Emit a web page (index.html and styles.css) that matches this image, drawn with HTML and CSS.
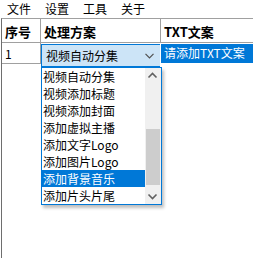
FILE: index.html
```html
<!DOCTYPE html>
<html lang="zh-CN">
<head>
    <meta charset="UTF-8">
    <title>视频处理</title>
    <link rel="stylesheet" href="styles.css">
</head>
<body>
    <div class="menubar">
        <span class="menu-item">文件</span>
        <span class="menu-item">设置</span>
        <span class="menu-item">工具</span>
        <span class="menu-item">关于</span>
    </div>

    <div class="grid">
        <div class="row header">
            <div class="cell col-no">序号</div>
            <div class="cell col-plan">处理方案</div>
            <div class="cell col-txt">TXT文案</div>
        </div>
        <div class="row">
            <div class="cell col-no">1</div>
            <div class="cell col-plan editing">
                <div class="combo">
                    <span class="combo-text">视频自动分集</span>
                    <svg class="combo-arrow" width="9" height="6" viewBox="0 0 9 6"><path d="M0.5 0.8 L4.5 4.8 L8.5 0.8" fill="none" stroke="#505050" stroke-width="1.2"/></svg>
                </div>
                <div class="dropdown">
                    <ul class="options">
                        <li>视频自动分集</li>
                        <li>视频添加标题</li>
                        <li>视频添加封面</li>
                        <li>添加虚拟主播</li>
                        <li>添加文字Logo</li>
                        <li>添加图片Logo</li>
                        <li class="selected">添加背景音乐</li>
                        <li>添加片头片尾</li>
                    </ul>
                    <div class="scrollbar">
                        <svg class="sb-btn" width="15" height="16" viewBox="0 0 15 16"><path d="M3.5 9.5 L7.5 5.5 L11.5 9.5" fill="none" stroke="#606060" stroke-width="1.6"/></svg>
                        <div class="sb-track"><div class="sb-thumb"></div></div>
                        <svg class="sb-btn" width="15" height="16" viewBox="0 0 15 16"><path d="M3.5 6.5 L7.5 10.5 L11.5 6.5" fill="none" stroke="#606060" stroke-width="1.6"/></svg>
                    </div>
                </div>
            </div>
            <div class="cell col-txt current">请添加TXT文案</div>
        </div>
    </div>
</body>
</html>
```

FILE: styles.css
```css
body {
    margin: 0;
    width: 253px;
    height: 258px;
    overflow: hidden;
    background-color: #ffffff;
    color: #000;
    font-family: "Microsoft YaHei", "Noto Sans CJK SC", sans-serif;
    font-size: 12px;
}

.menubar {
    display: flex;
    height: 18px;
    line-height: 17px;
}

.menu-item {
    padding: 0 7px;
}

.grid {
    height: 240px;
    margin-left: 1px;
    border-left: 1px solid #6e6e6e;
    border-top: 1px solid #a0a0a0;
}

.row {
    display: flex;
}

.cell {
    box-sizing: border-box;
    border-right: 1px solid #a0a0a0;
    border-bottom: 1px solid #a0a0a0;
    padding-left: 3px;
}

.row .cell {
    height: 21px;
    line-height: 21px;
}

.header .cell {
    height: 24px;
    padding-top: 3px;
    line-height: 20px;
    font-size: 13px;
    font-weight: bold;
}

.col-no {
    width: 39px;
}

.col-plan {
    width: 120px;
}

.col-txt {
    flex: 1;
    border-right: none;
}

.editing {
    position: relative;
    border: none;
}

.current {
    background-color: #0078d7;
    color: #fff;
    border-bottom: none;
    margin-top: 1px;
    height: 19px !important;
    line-height: 18px !important;
}

.combo {
    position: absolute;
    left: 0;
    top: 1px;
    width: 119px;
    height: 23px;
    box-sizing: border-box;
    display: flex;
    align-items: center;
    justify-content: space-between;
    padding: 0 6px 0 4px;
    background-color: #cce4f7;
    border: 1px solid #0078d7;
    border-right: none;
}

.combo-arrow {
    display: block;
}

.dropdown {
    position: absolute;
    left: 0;
    top: 24px;
    width: 121px;
    box-sizing: border-box;
    display: flex;
    border: 1px solid #0078d7;
    background-color: #fff;
    box-shadow: 2px 3px 3px rgba(0, 0, 0, 0.25);
}

.options {
    list-style: none;
    margin: 0;
    padding: 0;
    flex: 1;
}

.options li {
    height: 17px;
    line-height: 17px;
    padding-left: 1px;
    white-space: nowrap;
}

.options li.selected {
    background-color: #0078d7;
    color: #fff;
}

.scrollbar {
    width: 16px;
    display: flex;
    flex-direction: column;
    background-color: #f0f0f0;
}

.sb-btn {
    display: block;
    flex: none;
}

.sb-track {
    flex: 1;
    padding: 0 1px;
    display: flex;
    flex-direction: column;
    justify-content: flex-end;
    padding-bottom: 3px;
}

.sb-thumb {
    height: 56px;
    background-color: #cdcdcd;
}
```
